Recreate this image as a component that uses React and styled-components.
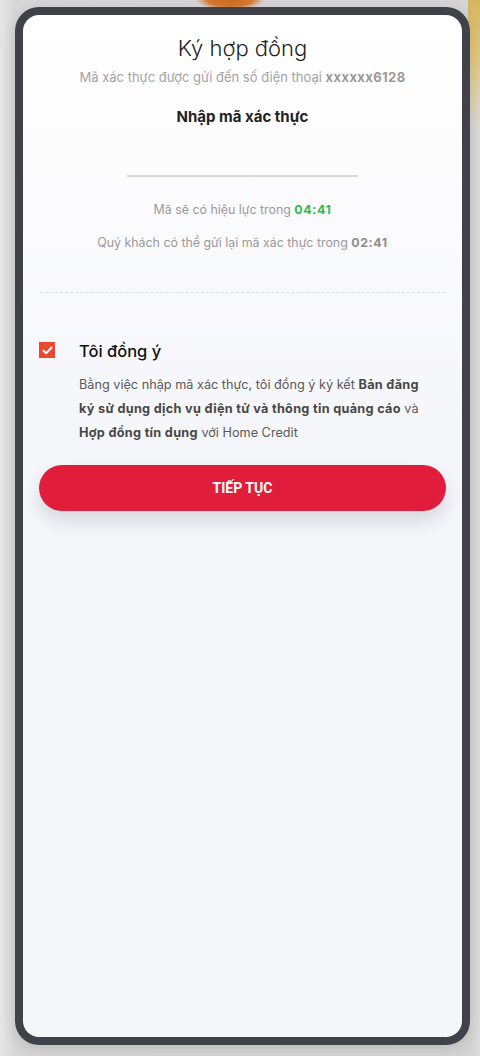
import React from "react";
import styled, { createGlobalStyle } from "styled-components";

const GlobalStyle = createGlobalStyle`
  * { box-sizing: border-box; }
  html, body { margin: 0; padding: 0; }
  body {
    width: 480px;
    height: 1056px;
    overflow: hidden;
    font-family: Inter, "Noto Sans", "Liberation Sans", sans-serif;
    background:
      radial-gradient(ellipse 34px 10px at 230px 0px, #cf6a22 0%, #d67a32 65%, rgba(214,122,50,0) 100%),
      linear-gradient(180deg, rgba(214,178,84,0.9) 0px, rgba(226,196,110,0.8) 60px, rgba(230,220,190,0) 130px) right top / 12px 140px no-repeat,
      linear-gradient(90deg, #e6e6e6 0px, #d6d6d6 15px, #d4d4d4 470px, #dcdcdc 480px);
  }
`;

const Stage = styled.div`
  width: 480px;
  height: 1056px;
  padding: 7px 10px 11px 15px;
`;

const Frame = styled.div`
  width: 100%;
  height: 100%;
  background: #404149;
  border-radius: 24px;
  padding: 8px;
  box-shadow: 0 4px 14px rgba(0, 0, 0, 0.12);
`;

const Screen = styled.div`
  width: 100%;
  height: 100%;
  border-radius: 16px;
  background: linear-gradient(180deg, #ffffff 0px, #fbfbfd 200px, #f5f6fa 420px, #f5f6fa 100%);
  padding: 18px 16px 0 16px;
  display: flex;
  flex-direction: column;
`;

const Title = styled.h1`
  margin: 0;
  text-align: center;
  font-size: 22px;
  font-weight: 300;
  color: #1f1f1f;
  line-height: 30px;
`;

const Sub = styled.p`
  margin: 6px 0 0;
  text-align: center;
  font-size: 13px;
  line-height: 16px;
  color: #a3a3a3;
  b { font-weight: 700; color: #9a9a9a; letter-spacing: 0.4px; }
`;

const Label = styled.p`
  margin: 22px 0 0;
  text-align: center;
  font-size: 15px;
  line-height: 20px;
  font-weight: 700;
  color: #222;
`;

const CodeLine = styled.div`
  width: 231px;
  height: 2px;
  background: #d8d8d8;
  margin: 48px auto 0;
`;

const Timer = styled.p`
  margin: ${(p) => p.$mt}px 0 0;
  text-align: center;
  font-size: 12.4px;
  line-height: 16px;
  color: #9a9a9a;
  b { font-weight: 700; color: ${(p) => p.$accent || "#8e8e8e"}; letter-spacing: 0.6px; }
`;

const Divider = styled.div`
  margin: 41px 1px 0;
  border-top: 1px dashed #dcdde3;
`;

const AgreeRow = styled.div`
  display: grid;
  grid-template-columns: 16px 1fr;
  column-gap: 24px;
  margin-top: 48px;
`;

const Check = styled.span`
  width: 16px;
  height: 16px;
  background: #e8492f;
  display: flex;
  align-items: center;
  justify-content: center;
  margin-top: 1px;
`;

const AgreeTitle = styled.div`
  font-size: 16.5px;
  line-height: 20px;
  font-weight: 500;
  color: #111;
`;

const AgreeText = styled.p`
  grid-column: 2;
  margin: 12px 0 0;
  padding-right: 10px;
  font-size: 12.7px;
  line-height: 24px;
  color: #5a5a5a;
  b { font-weight: 700; color: #474747; letter-spacing: 0.3px; }
`;

const Button = styled.button`
  margin-top: 20px;
  height: 46px;
  border: 0;
  border-radius: 23px;
  background: #e01e3c;
  color: #fff;
  font-family: Roboto, Inter, "Liberation Sans", sans-serif;
  font-weight: 700;
  font-size: 14px;
  box-shadow: 0 10px 18px rgba(60, 60, 80, 0.16);
`;

export default function App() {
  return (
    <>
      <GlobalStyle />
      <Stage>
        <Frame>
          <Screen>
            <Title>Ký hợp đồng</Title>
            <Sub>
              Mã xác thực được gửi đến số điện thoại <b>xxxxxx6128</b>
            </Sub>
            <Label>Nhập mã xác thực</Label>
            <CodeLine />
            <Timer $mt={25} $accent="#2dbb4a">
              Mã sẽ có hiệu lực trong <b>04:41</b>
            </Timer>
            <Timer $mt={17}>
              Quý khách có thể gửi lại mã xác thực trong <b>02:41</b>
            </Timer>
            <Divider />
            <AgreeRow>
              <Check>
                <svg width="11" height="9" viewBox="0 0 11 9">
                  <path d="M1.5 4.8 L4.2 7.3 L9.5 1.5" fill="none" stroke="#fff" strokeWidth="2" strokeLinecap="round" strokeLinejoin="round" />
                </svg>
              </Check>
              <AgreeTitle>Tôi đồng ý</AgreeTitle>
              <AgreeText>
                Bằng việc nhập mã xác thực, tôi đồng ý ký kết <b>Bản đăng</b> <b>ký sử dụng dịch vụ điện tử và thông tin quảng cáo</b> và <b>Hợp đồng tín dụng</b> với Home Credit
              </AgreeText>
            </AgreeRow>
            <Button>TIẾP TỤC</Button>
          </Screen>
        </Frame>
      </Stage>
    </>
  );
}
